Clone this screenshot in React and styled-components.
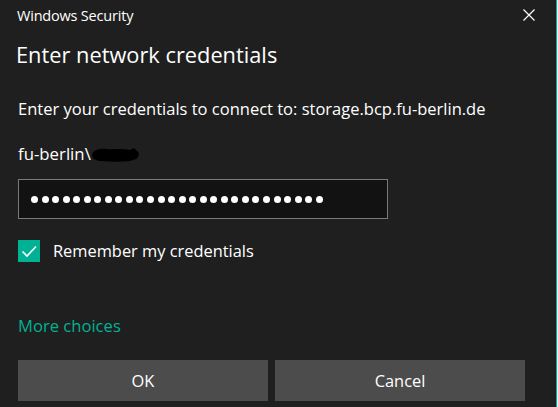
import React from 'react'
import styled, { createGlobalStyle } from 'styled-components'

const GlobalStyle = createGlobalStyle`
  html, body {
    margin: 0;
    padding: 0;
    background: #ffffff;
  }
  body {
    font-family: "Open Sans", "Noto Sans", "Liberation Sans", sans-serif;
  }
`;

const Window = styled.div`
  width: 556px;
  height: 407px;
  background: #1f1f1f;
  border-right: 1px solid #00b294;
  color: #ffffff;
  display: flex;
  flex-direction: column;
  overflow: hidden;
`;

const TitleBar = styled.div`
  height: 30px;
  display: flex;
  align-items: center;
  justify-content: space-between;
  padding: 0 21px 0 17px;
`;

const TitleText = styled.span`
  font-size: 14.5px;
  letter-spacing: -0.2px;
`;

const CloseIcon = styled.svg`
  width: 12px;
  height: 12px;
`;

const Body = styled.div`
  display: flex;
  flex-direction: column;
  padding: 0 18px;
`;

const Heading = styled.h1`
  margin: 10px 0 0 -2px;
  font-size: 21.8px;
  font-weight: 400;
  line-height: 30px;
`;

const Text = styled.div`
  font-size: ${p => p.$size || 16.6}px;
  line-height: 20px;
  margin-top: ${p => p.$top}px;
  color: ${p => p.$color || '#ffffff'};
`;

const UserRow = styled.div`
  display: flex;
  align-items: center;
  margin-top: 25px;
  font-size: 16.8px;
  line-height: 20px;
`;

const Redact = styled.svg`
  width: 50px;
  height: 18px;
`;

const PasswordBox = styled.div`
  margin-top: 15px;
  width: 370px;
  height: 40px;
  box-sizing: border-box;
  border: 1px solid #7a7a7a;
  background: #121212;
  display: flex;
  align-items: center;
  padding-left: 12px;
  gap: 3.55px;
`;

const Dot = styled.span`
  width: 7px;
  height: 7px;
  border-radius: 50%;
  background: #ffffff;
  flex: none;
`;

const CheckRow = styled.label`
  display: flex;
  align-items: center;
  gap: 13px;
  margin-top: 21px;
  font-size: 16.4px;
  line-height: 20px;
`;

const CheckBox = styled.span`
  width: 22px;
  height: 22px;
  background: #00b294;
  display: flex;
  align-items: center;
  justify-content: center;
`;

const ButtonRow = styled.div`
  display: grid;
  grid-template-columns: 250px 250px;
  gap: 7px;
  margin-top: 24px;
`;

const Button = styled.button`
  height: 41px;
  border: none;
  background: #4c4c4c;
  color: #ffffff;
  font-family: inherit;
  font-size: 16.4px;
  padding: 0;
`;

export default function App() {
  const dots = Array.from({ length: 28 })

  return (
    <>
      <GlobalStyle />
      <Window>
        <TitleBar>
          <TitleText>Windows Security</TitleText>
          <CloseIcon viewBox="0 0 12 12">
            <path d="M0.5 0.5 L11.5 11.5 M11.5 0.5 L0.5 11.5" stroke="#ffffff" strokeWidth="1.2" fill="none" />
          </CloseIcon>
        </TitleBar>
        <Body>
          <Heading>Enter network credentials</Heading>
          <Text $top={29} $size={16.5}>Enter your credentials to connect to: storage.bcp.fu-berlin.de</Text>
          <UserRow>
            fu-berlin\
            <Redact viewBox="0 0 50 18">
              <path d="M1 10 C2 5 8 3 15 4 C23 5 31 3 39 5 L43 3 L46 6 C49 8 48 12 45 14 L39 16 C30 17 20 17 11 16 C6 16 1 14 1 10 Z" fill="#000000" />
            </Redact>
          </UserRow>
          <PasswordBox>
            {dots.map((_, i) => <Dot key={i} />)}
          </PasswordBox>
          <CheckRow>
            <CheckBox>
              <svg width="18" height="18" viewBox="0 0 18 18">
                <path d="M2.5 9.5 L7 14 L16 4.5" stroke="#ffffff" strokeWidth="1.7" fill="none" />
              </svg>
            </CheckBox>
            Remember my credentials
          </CheckRow>
          <Text $top={54} $color="#00b294">More choices</Text>
          <ButtonRow>
            <Button>OK</Button>
            <Button>Cancel</Button>
          </ButtonRow>
        </Body>
      </Window>
    </>
  )
}
